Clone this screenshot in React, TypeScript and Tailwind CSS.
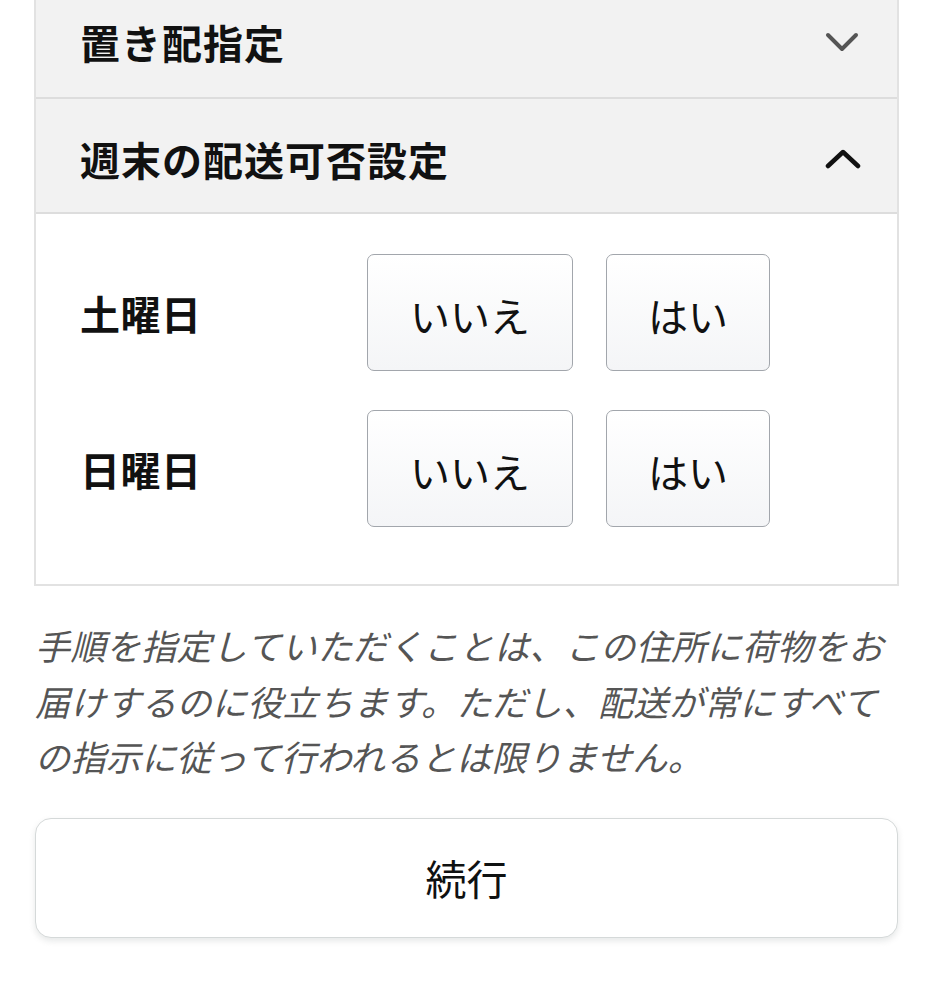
import React from "react";

const font = { fontFamily: '"Noto Sans CJK JP", "Noto Sans", sans-serif' };

function ChevronDown() {
  return (
    <svg width="34" height="22" viewBox="0 0 34 22" fill="none">
      <path d="M3 4 L17 18 L31 4" stroke="#555555" strokeWidth="4" strokeLinecap="round" strokeLinejoin="round" />
    </svg>
  );
}

function ChevronUp() {
  return (
    <svg width="36" height="22" viewBox="0 0 36 22" fill="none">
      <path d="M3 18 L18 4 L33 18" stroke="#111111" strokeWidth="4.5" strokeLinecap="round" strokeLinejoin="round" />
    </svg>
  );
}

function ChoiceButton({ label, wide }: { label: string; wide?: boolean }) {
  return (
    <button
      className={`${wide ? "w-[206px]" : "w-[164px]"} h-[117px] rounded-[7px] border-[1.5px] border-[#a2a6ac] bg-gradient-to-b from-[#ffffff] to-[#f4f5f7] text-[40px] text-[#111111] flex items-center justify-center pt-[4px] leading-none`}
    >
      {label}
    </button>
  );
}

function Row({ day }: { day: string }) {
  return (
    <div className="flex items-center">
      <div className="w-[287px] text-[40px] font-bold text-[#111111] leading-none tracking-[0.5px]">{day}</div>
      <div className="flex gap-[33px]">
        <ChoiceButton label="いいえ" wide />
        <ChoiceButton label="はい" />
      </div>
    </div>
  );
}

export default function App() {
  return (
    <div className="w-[933px] h-[999px] overflow-hidden bg-white" style={font}>
      <div className="mx-[34px] -mt-[14px] border-x-2 border-b-2 border-[#e2e2e2]">
        <div className="h-[113px] bg-[#f2f2f2] flex items-center justify-between pl-[44px] pr-[38px] border-b-2 border-[#dddddd]">
          <span className="text-[40px] font-bold text-[#111111] leading-none tracking-[1px]">置き配指定</span>
          <ChevronDown />
        </div>
        <div className="h-[115px] bg-[#f2f2f2] flex items-center justify-between pl-[44px] pr-[36px] pt-[6px] border-b-2 border-[#dddddd]">
          <span className="text-[40px] font-bold text-[#111111] leading-none tracking-[1px]">週末の配送可否設定</span>
          <ChevronUp />
        </div>
        <div className="bg-white pl-[44px] pt-[40px] pb-[57px] flex flex-col gap-[39px]">
          <Row day="土曜日" />
          <Row day="日曜日" />
        </div>
      </div>
      <p className="mx-[35px] mt-[31px] text-[35px] leading-[55.5px] italic text-[#555555] tracking-[0.4px]">
        手順を指定していただくことは、この住所に荷物をお届けするのに役立ちます。ただし、配送が常にすべての指示に従って行われるとは限りません。
      </p>
      <div className="mx-[35px] mt-[34px]">
        <button className="w-full h-[120px] rounded-[16px] border border-[#d5d9d9] bg-white shadow-[0_3px_6px_rgba(213,217,217,0.6)] text-[41px] text-[#0f1111] flex items-center justify-center">
          続行
        </button>
      </div>
    </div>
  );
}
